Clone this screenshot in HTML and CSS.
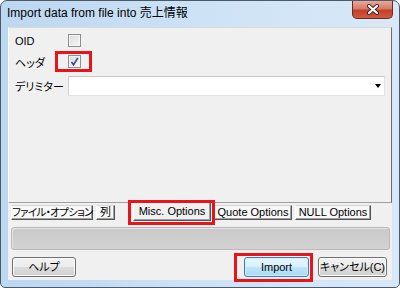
FILE: index.html
```html
<!DOCTYPE html>
<html>
  <head>
    <title>Import data</title>
    <link rel="stylesheet" href="styles.css">
  </head>
  <body>
    <div class="window">
      <div class="titlebar">
        <span class="title">Import data from file into 売上情報</span>
        <div class="close">
          <svg width="14" height="11" viewBox="0 0 14 11">
            <path d="M3 2 L11 9 M11 2 L3 9" stroke="#3a2020" stroke-width="4" stroke-linecap="round" />
            <path d="M3 2 L11 9 M11 2 L3 9" stroke="#fff" stroke-width="2.2" stroke-linecap="round" />
          </svg>
        </div>
      </div>
      <div class="client">
        <div class="page">
          <div class="row">
            <span class="label">OID</span>
            <span class="check"></span>
          </div>
          <div class="row">
            <span class="label">ヘッダ</span>
            <span class="check">
              <svg width="11" height="11" viewBox="0 0 11 11">
                <path d="M2.5 6 L4.5 8.8 L8.8 1.8" fill="none" stroke="#35498a" stroke-width="1.6" />
              </svg>
            </span>
          </div>
          <div class="row row-combo">
            <span class="label">デリミター</span>
            <div class="combo"><span class="arrow"></span></div>
          </div>
        </div>
        <div class="tabs">
          <div class="tab tab-file">ファイル・オプション</div>
          <div class="tab tab-col">列</div>
          <div class="tab tab-misc selected">Misc. Options</div>
          <div class="tab tab-quote">Quote Options</div>
          <div class="tab tab-null">NULL Options</div>
        </div>
        <div class="progress"></div>
        <div class="buttons">
          <div class="btn btn-help">ヘルプ</div>
          <div class="btn btn-import default">Import</div>
          <div class="btn btn-cancel">キャンセル(C)</div>
        </div>
      </div>
      <div class="mark mark-check"></div>
      <div class="mark mark-tab"></div>
      <div class="mark mark-import"></div>
    </div>
  </body>
</html>
```

FILE: styles.css
```css
* {
  box-sizing: border-box;
}
body {
  margin: 0;
  font: 11px "Liberation Sans", "Noto Sans CJK JP", sans-serif;
  font-feature-settings: "palt";
  color: #000;
  background: #fff;
}
.window {
  position: relative;
  width: 400px;
  height: 288px;
  border: 1px solid #4b5a6b;
  border-radius: 7px 7px 5px 5px;
  background: linear-gradient(90deg, #bcd7f0 0%, #cfe3f6 55%, #d8e8f7 100%);
  padding: 0 7px 7px;
  display: flex;
  flex-direction: column;
  overflow: hidden;
}
.titlebar {
  height: 26px;
  display: flex;
  align-items: flex-start;
}
.title {
  font-size: 12px;
  line-height: 14px;
  padding-top: 5px;
  margin-left: -1px;
}
.close {
  margin-left: auto;
  margin-right: -1px;
  width: 41px;
  height: 18px;
  border: 1px solid #6b2a24;
  border-top: none;
  border-radius: 0 0 5px 5px;
  background: linear-gradient(#e8a99c 0%, #d77a68 45%, #c4402a 55%, #cf5a3e 100%);
  display: flex;
  align-items: center;
  justify-content: center;
}
.client {
  flex: 1;
  background: #f0f0f0;
  display: flex;
  flex-direction: column;
}
.page {
  height: 176px;
  border: 1px solid;
  border-color: #d9d9d9 #6d6d6d #a0a0a0 #ffffff;
  padding: 2px 0 0 6px;
}
.row {
  height: 21px;
  display: flex;
  align-items: center;
}
.row-combo {
  height: 20px;
  margin-top: 4px;
}
.label {
  width: 53px;
  font-size: 11px;
}
.check {
  width: 13px;
  height: 13px;
  border: 1px solid #8e8f8f;
  background: linear-gradient(135deg, #dcdcdc, #f6f6f6);
  box-shadow: inset 0 0 0 1px #f4f4f4;
  display: flex;
  align-items: center;
  justify-content: center;
}
.combo {
  width: 317px;
  height: 20px;
  background: #fff;
  border: 1px solid;
  border-color: #c8c8c8 #e2e2e2 #e2e2e2 #d0d0d0;
  display: flex;
  align-items: center;
  justify-content: flex-end;
  padding-right: 3px;
}
.arrow {
  width: 0;
  height: 0;
  border-left: 3.5px solid transparent;
  border-right: 3.5px solid transparent;
  border-top: 4px solid #000;
}
.tabs {
  height: 18px;
  display: flex;
  align-items: flex-start;
  padding: 2px 0 0 3px;
}
.tab {
  height: 15px;
  border: 1px solid;
  border-color: #d4d4d4 #555 #555 #fff;
  background: #f7f7f7;
  box-shadow: inset -1px -1px 0 #a0a0a0;
  font-size: 11px;
  line-height: 13px;
  text-align: center;
  white-space: nowrap;
  margin-right: 3px;
}
.tab-file {
  width: 82px;
  font-size: 10.5px;
  letter-spacing: -0.7px;
}
.tab-col {
  width: 19px;
}
.tab-misc {
  width: 78px;
  margin-left: 15px;
}
.tab-quote {
  width: 78px;
}
.tab-null {
  width: 76px;
}
.tab.selected {
  height: 18px;
  margin-top: -2px;
  border-top: none;
  background: #f0f0f0;
  padding-top: 2px;
}
.progress {
  height: 23px;
  margin: 6px 2px 0 3px;
  border: 1px solid #b9b9b9;
  border-radius: 3px;
  background: linear-gradient(#c9c9c9, #d2d2d2);
  box-shadow: inset 1px 1px 0 #e4e4e4;
}
.buttons {
  display: flex;
  margin-top: 7px;
  padding: 0 5px 0 4px;
}
.btn {
  height: 20px;
  border: 1px solid #707070;
  border-radius: 3px;
  background: linear-gradient(#f2f2f2 0%, #ebebeb 50%, #dddddd 50%, #cfcfcf 100%);
  box-shadow: inset 0 0 0 1px #fcfcfc;
  font-size: 11px;
  line-height: 18px;
  text-align: center;
  white-space: nowrap;
}
.btn-help {
  width: 64px;
}
.btn-import {
  width: 65px;
  margin-left: auto;
}
.btn-cancel {
  width: 69px;
  margin-left: 9px;
}
.btn.default {
  border-color: #3c7fb1;
  background: linear-gradient(#eaf6fd 0%, #d9f0fc 50%, #bee6fd 50%, #a7d9f5 100%);
  box-shadow: inset 0 0 0 1px #cdeeff;
}
.mark {
  position: absolute;
  border: 3px solid #e8141c;
}
.mark-check {
  left: 54px;
  top: 50px;
  width: 37px;
  height: 21px;
}
.mark-tab {
  left: 127px;
  top: 199px;
  width: 87px;
  height: 25px;
}
.mark-import {
  left: 233px;
  top: 252px;
  width: 79px;
  height: 29px;
}
```
